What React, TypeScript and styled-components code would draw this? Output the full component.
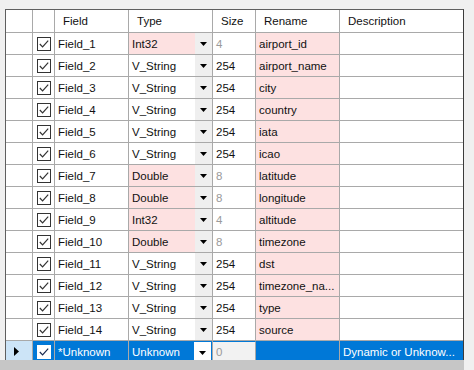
import styled, { createGlobalStyle } from 'styled-components';

interface IField {
  name: string;
  type: string;
  size: string;
  rename: string;
  fixed: boolean;
}

const fields: IField[] = [
  { name: 'Field_1', type: 'Int32', size: '4', rename: 'airport_id', fixed: true },
  { name: 'Field_2', type: 'V_String', size: '254', rename: 'airport_name', fixed: false },
  { name: 'Field_3', type: 'V_String', size: '254', rename: 'city', fixed: false },
  { name: 'Field_4', type: 'V_String', size: '254', rename: 'country', fixed: false },
  { name: 'Field_5', type: 'V_String', size: '254', rename: 'iata', fixed: false },
  { name: 'Field_6', type: 'V_String', size: '254', rename: 'icao', fixed: false },
  { name: 'Field_7', type: 'Double', size: '8', rename: 'latitude', fixed: true },
  { name: 'Field_8', type: 'Double', size: '8', rename: 'longitude', fixed: true },
  { name: 'Field_9', type: 'Int32', size: '4', rename: 'altitude', fixed: true },
  { name: 'Field_10', type: 'Double', size: '8', rename: 'timezone', fixed: true },
  { name: 'Field_11', type: 'V_String', size: '254', rename: 'dst', fixed: false },
  { name: 'Field_12', type: 'V_String', size: '254', rename: 'timezone_na...', fixed: false },
  { name: 'Field_13', type: 'V_String', size: '254', rename: 'type', fixed: false },
  { name: 'Field_14', type: 'V_String', size: '254', rename: 'source', fixed: false },
];

const PINK = '#fde1e1';
const BLUE = '#0078d7';
const LINE = '#a9a9a9';

const GlobalStyle = createGlobalStyle`
  html, body {
    margin: 0;
    padding: 0;
    background: #f0f0f0;
  }

  body {
    font-family: "Liberation Sans", Arial, sans-serif;
    font-size: 11.5px;
    color: #111;
  }
`;

function CheckBox({ selected }: { selected?: boolean }) {
  return (
    <Box $selected={selected}>
      <svg width="12" height="12" viewBox="0 0 12 12">
        <path
          d="M1.8 6 L4.6 8.8 L10.2 2.6"
          fill="none"
          stroke={selected ? '#1a2a50' : '#333'}
          strokeWidth="1.2"
        />
      </svg>
    </Box>
  );
}

function DropArrow() {
  return (
    <svg width="7" height="4" viewBox="0 0 7 4">
      <path d="M0 0 H7 L3.5 4 Z" fill="#000" />
    </svg>
  );
}

export default function App() {
  return (
    <>
      <GlobalStyle />
      <Page>
        <Frame>
          <HeaderRow>
            <HeaderCell />
            <HeaderCell />
            <HeaderCell>Field</HeaderCell>
            <HeaderCell>Type</HeaderCell>
            <HeaderCell>Size</HeaderCell>
            <HeaderCell>Rename</HeaderCell>
            <HeaderCell $last>Description</HeaderCell>
          </HeaderRow>

          {fields.map((f) => (
            <Row key={f.name}>
              <RowHeader />
              <CheckCell>
                <CheckBox />
              </CheckCell>
              <Cell>{f.name}</Cell>
              <TypeCell $bg={f.fixed ? PINK : '#fff'}>
                <TypeText>{f.type}</TypeText>
                <DropButton>
                  <DropArrow />
                </DropButton>
              </TypeCell>
              <Cell $muted={f.fixed}>{f.size}</Cell>
              <Cell $bg={PINK}>{f.rename}</Cell>
              <Cell $last />
            </Row>
          ))}

          <Row>
            <RowHeader $selected>
              <svg width="5" height="9" viewBox="0 0 5 9">
                <path d="M0 0 L5 4.5 L0 9 Z" fill="#000" />
              </svg>
            </RowHeader>
            <CheckCell $bg={BLUE}>
              <CheckBox selected />
            </CheckCell>
            <Cell $bg={BLUE} $light>
              *Unknown
            </Cell>
            <TypeCell $bg={BLUE}>
              <TypeText $light>Unknown</TypeText>
              <DropButton $selected>
                <DropArrow />
              </DropButton>
            </TypeCell>
            <SizeEdit>0</SizeEdit>
            <Cell $bg={BLUE} />
            <Cell $bg={BLUE} $light $last>
              Dynamic or Unknow...
            </Cell>
          </Row>
        </Frame>
        <BottomBar />
      </Page>
    </>
  );
}

const Page = styled.div`
  display: flex;
  flex-direction: column;
  padding-top: 9px;
  width: 474px;
  height: 370px;
  box-sizing: border-box;
  overflow: hidden;
`;

const Frame = styled.div`
  width: 459px;
  height: 351px;
  margin-left: 5px;
  box-sizing: border-box;
  overflow: hidden;
  background: #fff;
  border-top: 1px solid #5f5f5f;
  border-left: 1px solid #5f5f5f;
  border-right: 1px solid #3c3c3c;
`;

const BottomBar = styled.div`
  width: 464px;
  height: 10px;
  background: #c6c6c6;
`;

const columns = '27px 22px 74px 84px 43px 84px 123px';

const HeaderRow = styled.div`
  display: grid;
  grid-template-columns: ${columns};
  height: 23px;
  box-sizing: border-box;
  border-bottom: 1px solid ${LINE};
`;

const HeaderCell = styled.div<{ $last?: boolean }>`
  display: flex;
  align-items: center;
  padding-left: 8px;
  border-right: ${(p) => (p.$last ? 'none' : `1px solid ${LINE}`)};
  white-space: nowrap;
`;

const Row = styled.div`
  display: grid;
  grid-template-columns: ${columns};
  height: 22px;
  box-sizing: border-box;
  border-bottom: 1px solid ${LINE};
`;

const RowHeader = styled.div<{ $selected?: boolean }>`
  display: flex;
  align-items: center;
  padding-left: 8px;
  background: ${(p) => (p.$selected ? '#cce4f7' : '#fff')};
  border-right: 1px solid ${LINE};
`;

const Cell = styled.div<{ $bg?: string; $muted?: boolean; $light?: boolean; $last?: boolean }>`
  display: flex;
  align-items: center;
  padding-left: 3px;
  overflow: hidden;
  white-space: nowrap;
  background: ${(p) => p.$bg || '#fff'};
  color: ${(p) => (p.$light ? '#fff' : p.$muted ? '#9a9a9a' : '#111')};
  border-right: ${(p) => (p.$last ? 'none' : `1px solid ${LINE}`)};
`;

const CheckCell = styled.div<{ $bg?: string }>`
  display: flex;
  align-items: center;
  justify-content: center;
  background: ${(p) => p.$bg || '#fff'};
  border-right: 1px solid ${LINE};
`;

const Box = styled.div<{ $selected?: boolean }>`
  display: flex;
  align-items: center;
  justify-content: center;
  width: 14px;
  height: 14px;
  box-sizing: border-box;
  background: #fff;
  border: 1px solid ${(p) => (p.$selected ? '#fff' : '#333')};
`;

const TypeCell = styled.div<{ $bg: string }>`
  display: flex;
  align-items: stretch;
  background: ${(p) => p.$bg};
  border-right: 1px solid ${LINE};
`;

const TypeText = styled.span<{ $light?: boolean }>`
  flex: 1;
  display: flex;
  align-items: center;
  padding-left: 3px;
  color: ${(p) => (p.$light ? '#fff' : '#111')};
`;

const DropButton = styled.div<{ $selected?: boolean }>`
  display: flex;
  align-items: center;
  justify-content: center;
  width: 17px;
  margin: ${(p) => (p.$selected ? '1px 1px 0 0' : '0')};
  padding-top: 1px;
  background: ${(p) => (p.$selected ? '#fff' : '#efefef')};
`;

const SizeEdit = styled.div`
  display: flex;
  align-items: center;
  padding-left: 3px;
  color: #9a9a9a;
  background: #f2f2f2;
  border-top: 1px solid ${BLUE};
  border-right: 1px solid ${LINE};
`;
